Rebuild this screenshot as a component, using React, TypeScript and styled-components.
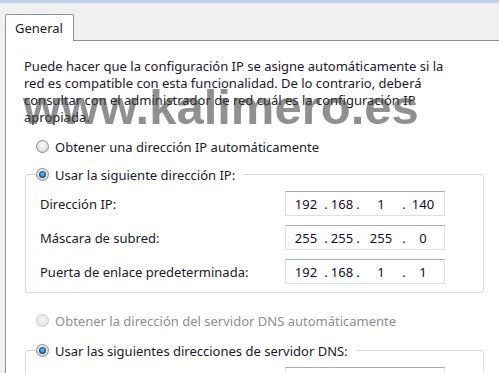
import styled, { createGlobalStyle } from 'styled-components';

const GlobalStyle = createGlobalStyle`
  html, body {
    margin: 0;
    padding: 0;
    background: #f0f0f0;
    overflow: hidden;
  }
`;

const Window = styled.div`
  position: relative;
  width: 499px;
  height: 373px;
  overflow: hidden;
  background: #f0f0f0;
  font-family: "Noto Sans", "Open Sans", sans-serif;
  font-size: 13px;
  color: #1a1a2a;
`;

const TitleEdge = styled.div`
  height: 3px;
  background: linear-gradient(#b7cce5, #cbdaed);
  border-bottom: 1px solid #e3e9f1;
`;

const TabRow = styled.div`
  display: flex;
  padding: 10px 0 0 5px;
`;

const Tab = styled.div`
  position: relative;
  z-index: 1;
  box-sizing: border-box;
  width: 69px;
  height: 27px;
  margin-bottom: -1px;
  padding: 3px 0 0 9px;
  background: #fff;
  border: 1px solid #8d9097;
  border-bottom: none;
  border-radius: 2px 2px 0 0;
  line-height: 20px;
`;

const Panel = styled.div`
  width: 600px;
  height: 340px;
  margin-left: 5px;
  padding: 17px 0 0 18px;
  background: #fff;
  border-top: 1px solid #8d9097;
  border-left: 1px solid #8d9097;
`;

const Intro = styled.p`
  margin: 0;
  line-height: 17px;
`;

const RadioLine = styled.div<{ $disabled?: boolean; $top?: number; $left?: number }>`
  display: flex;
  align-items: center;
  gap: 6px;
  height: 17px;
  margin: ${(p) => p.$top ?? 0}px 0 0 ${(p) => p.$left ?? 0}px;
  white-space: nowrap;
  color: ${(p) => (p.$disabled ? '#8e8e8e' : '#1a1a2a')};
`;

const Radio = styled.span<{ $checked?: boolean; $disabled?: boolean }>`
  position: relative;
  box-sizing: border-box;
  flex: none;
  width: 13px;
  height: 13px;
  border-radius: 50%;
  border: 1px solid ${(p) => (p.$disabled ? '#cacaca' : '#8a8c8e')};
  background: ${(p) =>
    p.$disabled
      ? 'radial-gradient(circle at 50% 40%, #f4f4f4, #e2e2e2)'
      : 'radial-gradient(circle at 50% 35%, #ffffff, #d6d6d6 80%)'};

  &::after {
    content: '';
    display: ${(p) => (p.$checked ? 'block' : 'none')};
    position: absolute;
    left: 2px;
    top: 2px;
    width: 7px;
    height: 7px;
    border-radius: 50%;
    background: radial-gradient(circle at 50% 45%, #7fd6fb 0, #2a8fd6 35%, #1b3f66 70%, #14263b 100%);
  }
`;

const Group = styled.fieldset<{ $top: number }>`
  box-sizing: border-box;
  width: 459px;
  min-width: 0;
  margin: ${(p) => p.$top}px 0 0 1px;
  padding: 8px 14px 8px 14px;
  border: 1px solid #d6dade;
  border-radius: 3px;
`;

const Legend = styled.legend`
  margin-left: -5px;
  padding: 0 8px 0 1px;
`;

const Rows = styled.div`
  display: flex;
  flex-direction: column;
  gap: 9px;
`;

const FieldRow = styled.div`
  display: grid;
  grid-template-columns: 245px 160px;
  align-items: center;
  height: 25px;
  white-space: nowrap;
`;

const IpBox = styled.div`
  box-sizing: border-box;
  display: grid;
  grid-template-columns: 34px 6px 26px 6px 40px 6px 32px;
  align-items: center;
  justify-items: center;
  width: 160px;
  height: 25px;
  padding-left: 3px;
  background: #fff;
  border: 1px solid #dde1e6;
  border-top-color: #abadb3;
  color: #10102a;
`;

const Watermark = styled.div`
  position: absolute;
  left: 23px;
  top: 83px;
  font: bold 49px/1 "Liberation Sans", Arial, sans-serif;
  color: rgba(64, 64, 64, 0.58);
  white-space: nowrap;
  pointer-events: none;
`;

function IpField({ value }: { value: string[] }) {
  return (
    <IpBox>
      <span>{value[0]}</span>
      <span>.</span>
      <span>{value[1]}</span>
      <span>.</span>
      <span>{value[2]}</span>
      <span>.</span>
      <span>{value[3]}</span>
    </IpBox>
  );
}

const ipRows = [
  { label: 'Dirección IP:', value: ['192', '168', '1', '140'] },
  { label: 'Máscara de subred:', value: ['255', '255', '255', '0'] },
  { label: 'Puerta de enlace predeterminada:', value: ['192', '168', '1', '1'] },
];

const dnsRows = [
  { label: 'Servidor DNS preferido:', value: ['', '', '', ''] },
  { label: 'Servidor DNS alternativo:', value: ['', '', '', ''] },
];

export default function App() {
  return (
    <Window>
      <GlobalStyle />
      <TitleEdge />
      <TabRow>
        <Tab>General</Tab>
      </TabRow>
      <Panel>
        <Intro>
          Puede hacer que la configuración IP se asigne automáticamente si la
          <br />
          red es compatible con esta funcionalidad. De lo contrario, deberá
          <br />
          consultar con el administrador de red cuál es la configuración IP
          <br />
          apropiada.
        </Intro>

        <RadioLine $top={12} $left={12}>
          <Radio />
          Obtener una dirección IP automáticamente
        </RadioLine>

        <Group $top={11}>
          <Legend>
            <RadioLine>
              <Radio $checked />
              Usar la siguiente dirección IP:
            </RadioLine>
          </Legend>
          <Rows>
            {ipRows.map((row) => (
              <FieldRow key={row.label}>
                <span>{row.label}</span>
                <IpField value={row.value} />
              </FieldRow>
            ))}
          </Rows>
        </Group>

        <RadioLine $top={19} $left={12} $disabled>
          <Radio $disabled />
          Obtener la dirección del servidor DNS automáticamente
        </RadioLine>

        <Group $top={13}>
          <Legend>
            <RadioLine>
              <Radio $checked />
              Usar las siguientes direcciones de servidor DNS:
            </RadioLine>
          </Legend>
          <Rows>
            {dnsRows.map((row) => (
              <FieldRow key={row.label}>
                <span>{row.label}</span>
                <IpField value={row.value} />
              </FieldRow>
            ))}
          </Rows>
        </Group>
      </Panel>
      <Watermark>www.kalimero.es</Watermark>
    </Window>
  );
}
